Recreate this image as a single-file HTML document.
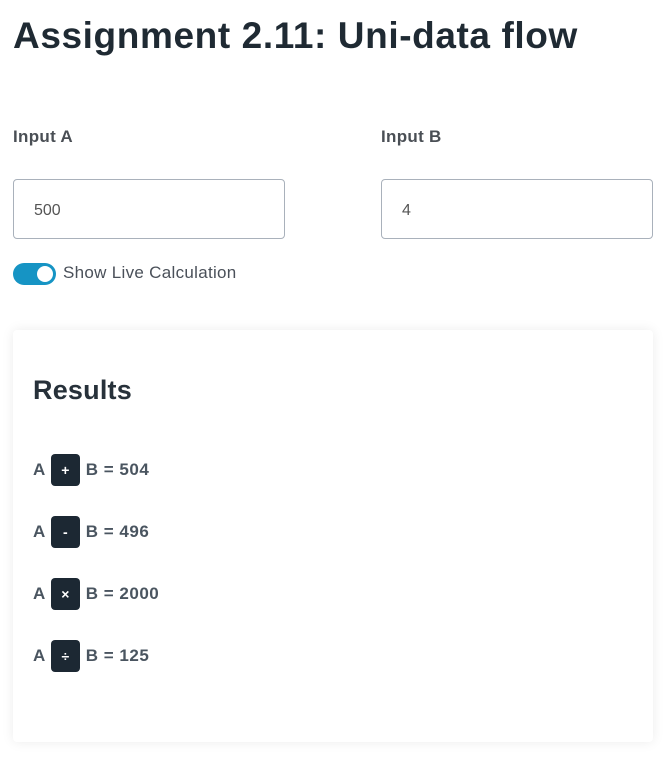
<!DOCTYPE html>
<html><head><style>
body{margin:0;background:#fff;font-family:"Liberation Sans",sans-serif;color:#212b36;width:671px;height:775px;overflow:hidden;position:relative}
h1{position:absolute;left:13px;top:15px;margin:0;font-size:37px;font-weight:bold;color:#1f2a33;letter-spacing:0.6px}
.lbl{position:absolute;top:127px;font-size:17px;font-weight:bold;color:#4a4f55;letter-spacing:0.3px}
.inp{position:absolute;top:179px;width:272px;height:60px;border:1px solid #a9b1bb;border-radius:4px;box-sizing:border-box;font-size:16px;color:#555;padding:22px 0 0 20px}
.tog{position:absolute;left:13px;top:263px;width:43px;height:22px;border-radius:11px;background:#1694c4}
.tog i{position:absolute;right:3px;top:3px;width:16px;height:16px;border-radius:50%;background:#fff}
.tl{position:absolute;left:63px;top:263px;font-size:17px;color:#4a5059;letter-spacing:0.3px}
.card{position:absolute;left:13px;top:330px;width:640px;height:412px;border-radius:4px;box-shadow:0 0 12px rgba(0,0,0,0.08);background:#fff}
.card h2{position:absolute;left:20px;top:45px;margin:0;font-size:27px;font-weight:bold;color:#27313a;letter-spacing:0.2px}
.row{position:absolute;left:20px;font-size:17px;font-weight:bold;color:#4a5560;display:flex;align-items:center;letter-spacing:0.5px}
.op{display:inline-block;width:29px;height:32px;background:#1c2833;color:#fff;border-radius:4px;text-align:center;line-height:32px;font-size:14px;margin:0 6px 0 5px;letter-spacing:0}
</style></head><body>
<h1>Assignment 2.11: Uni-data flow</h1>
<div class="lbl" style="left:13px">Input A</div>
<div class="lbl" style="left:381px">Input B</div>
<div class="inp" style="left:13px">500</div>
<div class="inp" style="left:381px">4</div>
<div class="tog"><i></i></div>
<div class="tl">Show Live Calculation</div>
<div class="card">
<h2>Results</h2>
<div class="row" style="top:124px">A<span class="op">+</span>B = 504</div>
<div class="row" style="top:186px">A<span class="op">-</span>B = 496</div>
<div class="row" style="top:248px">A<span class="op">×</span>B = 2000</div>
<div class="row" style="top:310px">A<span class="op">÷</span>B = 125</div>
</div>
</body></html>
